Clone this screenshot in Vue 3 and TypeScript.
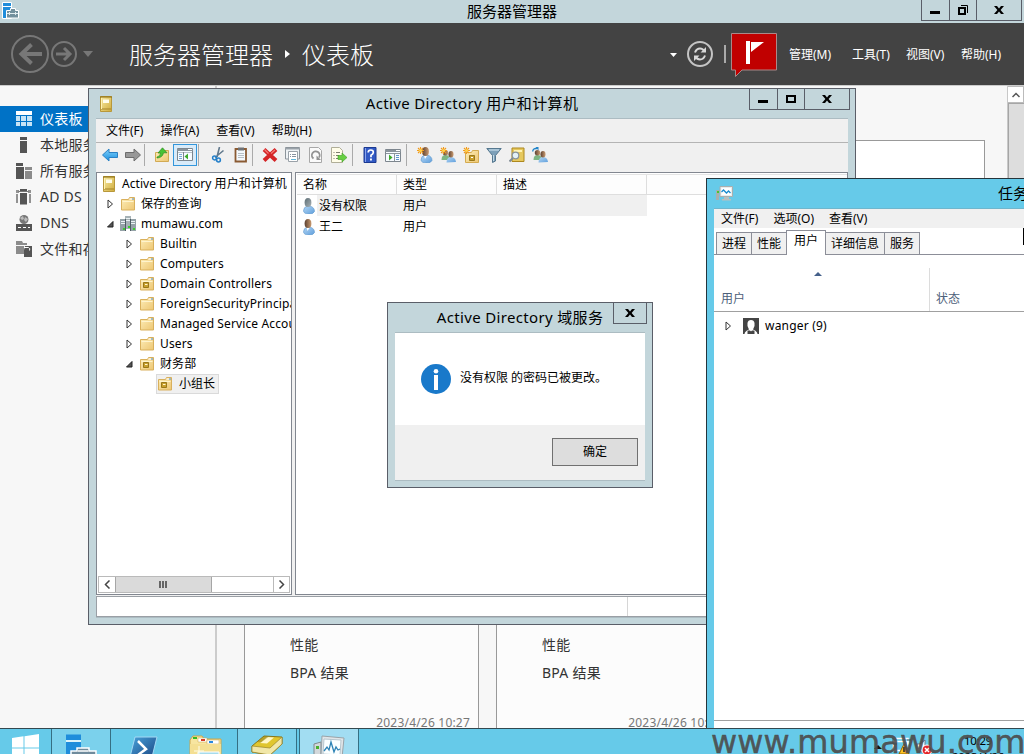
<script setup lang="ts">
interface NavItem { label: string; icon: string; active?: boolean }
interface TreeNode { label: string; icon: string; depth: number; state: 'open' | 'closed' | 'none'; selected?: boolean }
interface UserRow { name: string; type: string; icon: string; selected?: boolean }
interface Tool { icon: string; on?: boolean }

const navItems: NavItem[] = [
  { label: '仪表板', icon: 'n-dash', active: true },
  { label: '本地服务器', icon: 'n-local' },
  { label: '所有服务器', icon: 'n-all' },
  { label: 'AD DS', icon: 'n-adds' },
  { label: 'DNS', icon: 'n-dns' },
  { label: '文件和存储服务', icon: 'n-files' },
]

const tree: TreeNode[] = [
  { label: 'Active Directory 用户和计算机', icon: 'i-book', depth: 0, state: 'none' },
  { label: '保存的查询', icon: 'i-folder', depth: 1, state: 'closed' },
  { label: 'mumawu.com', icon: 'i-domain', depth: 1, state: 'open' },
  { label: 'Builtin', icon: 'i-folder', depth: 2, state: 'closed' },
  { label: 'Computers', icon: 'i-folder', depth: 2, state: 'closed' },
  { label: 'Domain Controllers', icon: 'i-ou', depth: 2, state: 'closed' },
  { label: 'ForeignSecurityPrincipals', icon: 'i-folder', depth: 2, state: 'closed' },
  { label: 'Managed Service Accounts', icon: 'i-folder', depth: 2, state: 'closed' },
  { label: 'Users', icon: 'i-folder', depth: 2, state: 'closed' },
  { label: '财务部', icon: 'i-ou', depth: 2, state: 'open' },
  { label: '小组长', icon: 'i-ou', depth: 3, state: 'none', selected: true },
]

const users: UserRow[] = [
  { name: '没有权限', type: '用户', icon: 'i-user-gray', selected: true },
  { name: '王二', type: '用户', icon: 'i-user' },
]

const toolGroups: Tool[][] = [
  [{ icon: 't-back' }, { icon: 't-fwd' }],
  [{ icon: 't-up' }, { icon: 't-pane', on: true }],
  [{ icon: 't-cut' }, { icon: 't-clip' }],
  [{ icon: 't-del' }, { icon: 't-prop' }, { icon: 't-refresh' }, { icon: 't-export' }],
  [{ icon: 't-help' }, { icon: 't-run' }],
  [{ icon: 't-newuser' }, { icon: 't-newgroup' }, { icon: 't-newou' }, { icon: 't-filter' }, { icon: 't-find' }, { icon: 't-addgroup' }],
]

const adMenus = ['文件(F)', '操作(A)', '查看(V)', '帮助(H)']
const tmMenus = ['文件(F)', '选项(O)', '查看(V)']
const tabs = ['进程', '性能', '用户', '详细信息', '服务']
const tiles = ['2023/4/26 10:27', '2023/4/26 10:27']
</script>

<template>
  <div class="desktop">
    <svg class="defs" width="0" height="0">
      <defs>
        <linearGradient id="gGold" x1="0" y1="0" x2="1" y2="1"><stop offset="0" stop-color="#f8eba4" /><stop offset="1" stop-color="#d0ac3c" /></linearGradient>
        <linearGradient id="gFold" x1="0" y1="0" x2="1" y2="1"><stop offset="0" stop-color="#fdeeb8" /><stop offset="1" stop-color="#edc673" /></linearGradient>
        <linearGradient id="gBlue" x1="0" y1="0" x2="0" y2="1"><stop offset="0" stop-color="#7fd0fa" /><stop offset="1" stop-color="#1b8fe0" /></linearGradient>
        <linearGradient id="gBody" x1="0" y1="0" x2="1" y2="1"><stop offset="0" stop-color="#b4d6f4" /><stop offset="1" stop-color="#5f9fdc" /></linearGradient>
        <linearGradient id="gHead" x1="0" y1="0" x2="1" y2="0"><stop offset="0" stop-color="#5b4030" /><stop offset="1" stop-color="#c99a70" /></linearGradient>
        <linearGradient id="gGrayHead" x1="0" y1="0" x2="1" y2="1"><stop offset="0" stop-color="#5c6d74" /><stop offset="1" stop-color="#a9b2b6" /></linearGradient>
        <linearGradient id="gPs" x1="0" y1="0" x2="1" y2="1"><stop offset="0" stop-color="#4aa5dd" /><stop offset="1" stop-color="#173f7c" /></linearGradient>
      </defs>
      <symbol id="i-book" viewBox="0 0 16 16"><path d="M2.500.5h11v15h-11z" fill="url(#gGold)" stroke="#b8983a" /><path d="M2 1h12" stroke="#8a6c10" /><path d="M5 3.500h6v3.500H5z" fill="#fffdec" /><path d="M3 13h10" stroke="#a5852a" /><path d="M3.500 2v11" stroke="#fff3b5" /></symbol>
      <symbol id="i-folder" viewBox="0 0 16 16"><path d="M1.500 3.500h7l1-2h5v12.500h-13z" fill="url(#gFold)" stroke="#d9b05c" /><path d="M9.500 3h3" stroke="#fff" /><path d="M12 3h2" stroke="#4a94dc" /><path d="M2.500 5.500h11" stroke="#fff4cd" /></symbol>
      <symbol id="i-ou" viewBox="0 0 16 16"><use href="#i-folder" /><path d="M4.500 6.500h5v5h-5z" fill="#c8a02e" stroke="#9a7818" /><path d="M6 8.500h2.500" stroke="#fff7cf" /></symbol>
      <symbol id="i-domain" viewBox="0 0 16 16"><path d="M5 0h6v13H5z" fill="#a6b2b6" /><path d="M0 3h6v12H0zM10 3h6v12h-6z" fill="#94a2a7" /><path d="M6 2.500h4M6 4.500h4M1 5.500h4M1 7.500h4M11 5.500h4M11 7.500h4" stroke="#eaf2f4" /><path d="M5.500 3v12M10.500 3v12" stroke="#4e5d64" /><path d="M3 13h2M8 11h2M13 13h2" stroke="#37d02b" stroke-width="2" /></symbol>
      <symbol id="i-user" viewBox="0 0 16 16"><path d="M2.500 13q0-4 4-5h2q5 1 5 5.500-1 2.500-5.500 2.500-5 0-5.500-3z" fill="url(#gBody)" stroke="#5b96cd" stroke-width=".6" /><path d="M5.500 8.500l1 3.500 2-3z" fill="#fff" /><ellipse cx="7" cy="4.500" rx="3.400" ry="4.500" fill="url(#gHead)" /></symbol>
      <symbol id="i-user-gray" viewBox="0 0 16 16"><path d="M2.500 13q0-4 4-5h2q5 1 5 5.500-1 2.500-5.500 2.500-5 0-5.500-3z" fill="url(#gBody)" stroke="#5b96cd" stroke-width=".6" /><ellipse cx="7" cy="4.500" rx="3.400" ry="4.500" fill="url(#gGrayHead)" /></symbol>
      <symbol id="i-star" viewBox="0 0 16 16"><path d="M3.500 0v7M0 3.500h7M1 1l5 5M6 1L1 6" stroke="#f19a1c" stroke-width="1.100" /><circle cx="3.500" cy="3.500" r="1.600" fill="#ffd24a" /></symbol>
      <symbol id="i-pair" viewBox="0 0 16 16"><path d="M1.500 13q0-5 4-5t5 5z" fill="#7db583" /><circle cx="5.500" cy="5.800" r="2.700" fill="url(#gHead)" /><path d="M6.500 15.500q0-5 4-5.500 5 0 5.500 5z" fill="url(#gBody)" /><ellipse cx="11" cy="7.200" rx="2.500" ry="3.200" fill="url(#gHead)" /></symbol>

      <symbol id="t-back" viewBox="0 0 16 16"><path d="M.5 8L7 2v3.500h8.500v5H7V14z" fill="url(#gBlue)" stroke="#2a80c4" /></symbol>
      <symbol id="t-fwd" viewBox="0 0 16 16"><path d="M15.500 8L9 2v3.500H.5v5H9V14z" fill="#989898" stroke="#6c6c6c" /></symbol>
      <symbol id="t-up" viewBox="0 0 16 16"><path d="M1.500 5.500h7l1.500-2h4.500v11h-13z" fill="url(#gFold)" stroke="#d2aa54" /><path d="M3 10q3.500-.5 3.500-4H4L8.500.8l4.500 5H9.500q-1 5-6.500 5.200z" fill="#48c234" stroke="#2a8d1e" stroke-width=".7" /></symbol>
      <symbol id="t-pane" viewBox="0 0 16 16"><path d="M.5 1.500h15v12H.5z" fill="#f7fbff" stroke="#7d868e" /><path d="M0 2h16v2H0z" fill="#8a949c" /><path d="M1 5.500h14" stroke="#b8c2ca" /><path d="M11 2.500h4" stroke="#fff" /><path d="M6.500 5v8" stroke="#7d868e" /><path d="M2 7.500h3M2 9.500h3M2 11.500h3" stroke="#7aa8d6" /><path d="M11 6.500v6l-3.500-3z" fill="#3dab2a" /></symbol>
      <symbol id="t-cut" viewBox="0 0 16 16"><path d="M9.500 0L7 10M13.500 3.500L5 10.500" stroke="#60788c" stroke-width="1.600" /><circle cx="4.500" cy="11" r="1.900" fill="none" stroke="#2580ca" stroke-width="1.500" /><circle cx="8.500" cy="13" r="1.900" fill="none" stroke="#2580ca" stroke-width="1.500" /></symbol>
      <symbol id="t-clip" viewBox="0 0 16 16"><path d="M2.500 2h10.500v12.500H2.500z" fill="#f4f9fd" stroke="#8a5a32" stroke-width="1.800" /><path d="M5 .5h6v3H5z" fill="#6e7276" /><path d="M5 6.500h6M5 8.500h6M5 10.500h6" stroke="#b8c0c6" /></symbol>
      <symbol id="t-del" viewBox="0 0 16 16"><path d="M2 2.500l12 11M14 2.500L2 13.500" stroke="#d42426" stroke-width="4" /><path d="M2.500 2.500l4 4M13 3L9 6.500" stroke="#f57a74" stroke-width="1.200" /></symbol>
      <symbol id="t-prop" viewBox="0 0 16 16"><path d="M.5.500h14v11.500H.5z" fill="#eef2f5" stroke="#8c949b" /><path d="M0 1h15v1.500H0z" fill="#9aa2a9" /><path d="M3.500 4.500h9v10h-9z" fill="#fff" stroke="#9aa2a9" /><path d="M5 7.500h1M7 7.500h4M5 9.500h1M7 9.500h4" stroke="#8793a0" /><path d="M6 12.500h5" stroke="#5fb6dc" /></symbol>
      <symbol id="t-refresh" viewBox="0 0 16 16"><path d="M1.500.5h9l3 3v12h-12z" fill="#fafafa" stroke="#a8a8a8" /><path d="M5.500 11.500a3.900 3.900 0 1 1 5.500-1" fill="none" stroke="#929292" stroke-width="1.800" /><path d="M8.500 8.500v4.500H13z" fill="#929292" /></symbol>
      <symbol id="t-export" viewBox="0 0 16 16"><path d="M.5.5h8l3 3v12H.5z" fill="#fffde9" stroke="#b0ae98" /><path d="M2.500 5.500h1M5 5.500h4M2.500 8.500h1M5 8.500h3M2.500 11.500h1M5 11.500h3" stroke="#7e7e70" /><path d="M7 8.500h4V6l5 4.500-5 4.500v-2.500H7z" fill="#67cf42" stroke="#3ea024" stroke-width=".6" /></symbol>
      <symbol id="t-help" viewBox="0 0 16 16"><path d="M2 .5h12v15H2z" fill="#3159c4" stroke="#1c3a91" /><path d="M3.500 1v14" stroke="#8aa4ec" /><path d="M6.200 5.500q0-2.500 2.600-2.500t2.500 2.500q0 1.300-2.300 2.800v2" fill="none" stroke="#fff" stroke-width="1.700" /><path d="M8 11.500h1.900v2H8z" fill="#fff" /></symbol>
      <symbol id="t-run" viewBox="0 0 16 16"><path d="M.5 2.500h15v12H.5z" fill="#f7fbff" stroke="#7d868e" /><path d="M0 3h16v2H0z" fill="#8a949c" /><path d="M11 3.500h4" stroke="#fff" /><path d="M1 6.500h14M9.500 6v8" stroke="#8b959d" /><path d="M11 8.500h3M11 10.500h3M11 12.500h3" stroke="#5f94cc" /><path d="M4 7.500v6l3.500-3z" fill="#3dab2a" /></symbol>
      <symbol id="t-newuser" viewBox="0 0 16 16"><use href="#i-user" x="1.500" width="16" height="16" /><use href="#i-star" width="16" height="16" /></symbol>
      <symbol id="t-newgroup" viewBox="0 0 16 16"><use href="#i-pair" /><use href="#i-star" /></symbol>
      <symbol id="t-newou" viewBox="0 0 16 16"><path d="M2.500 5.500h6l1-2h6v12h-13z" fill="url(#gFold)" stroke="#d4ab50" /><path d="M6.500 8.500h5v5h-5z" fill="#c8a02e" stroke="#9a7818" /><path d="M8 10.500h2" stroke="#fff" /><use href="#i-star" /></symbol>
      <symbol id="t-filter" viewBox="0 0 16 16"><path d="M.8 1.500h14.400L9.500 8.500V14L6.500 15.500v-7z" fill="#7da0b9" stroke="#56788f" /><path d="M3 3h10" stroke="#d6e8f3" /><path d="M7.500 8v6" stroke="#c4dae8" /></symbol>
      <symbol id="t-find" viewBox="0 0 16 16"><path d="M3 1h12v13.500H3z" fill="#e6c85e" stroke="#ad881e" /><path d="M5 3h8v2H5z" fill="#fff3b4" /><circle cx="6.500" cy="8.500" r="3.300" fill="#e3f1f8" stroke="#87929a" stroke-width="1.200" /><path d="M4 11L.5 14.500" stroke="#808b94" stroke-width="2" /></symbol>
      <symbol id="t-addgroup" viewBox="0 0 16 16"><use href="#i-pair" /><path d="M.7 4.500Q1 1 5 1.500" fill="none" stroke="#2084c9" stroke-width="1.400" /><path d="M3.500 0h3v3.500z" fill="#2084c9" /></symbol>

      <symbol id="n-dash" viewBox="0 0 16 16"><path d="M0 0h16v4H0z" fill="#fff" /><path d="M0 5h4v5H0zM5 5h5v5H5zM11 5h5v5h-5zM0 11h4v4H0zM5 11h5v4H5zM11 11h5v4h-5z" fill="#c7e4f6" /></symbol>
      <symbol id="n-local" viewBox="0 0 16 16"><path d="M4 0h7v3H4zM4 4h7v12H4z" fill="#555" /></symbol>
      <symbol id="n-all" viewBox="0 0 16 16"><path d="M0 0h7v3H0zM0 4h8v12H0z" fill="#555" /><path d="M9 4h7v3H9zM9 8h7v8H9z" fill="#8b8b8b" /></symbol>
      <symbol id="n-adds" viewBox="0 0 16 16"><path d="M0 1h3v3H0zM12 1h3v3h-3zM0 5h2v9H0zM13 5h2v9h-2z" fill="#929292" /><path d="M4 0h7v2H4zM4 4h7v11.500H4z" fill="#555" /><path d="M2.500 2.500h10" stroke="#777" /></symbol>
      <symbol id="n-dns" viewBox="0 0 16 16"><circle cx="8" cy="4.500" r="4.500" fill="#777" /><path d="M4 3l3-2 1 3-2 1zM9 2l3 2-2 3-2-2z" fill="#bbb" /><path d="M0 9h16v7H0z" fill="#555" /><path d="M2 12.500h3M7 12.500h3M12 12.500h2" stroke="#fff" /></symbol>
      <symbol id="n-files" viewBox="0 0 16 16"><path d="M0 0h6l1 2h4v2H0zM0 5h8v8H0z" fill="#8b8b8b" /><path d="M9 5h7v11H8V9z" fill="#555" /><path d="M8 6.500h4.500q2 1 1 3" fill="none" stroke="#fff" /></symbol>
      <symbol id="w-x" viewBox="0 0 10 8"><path d="M0 0h3l2 2.500L7 0h3L6.600 4 10 8H7L5 5.500 3 8H0l3.400-4z" /></symbol>
    </svg>

    <!-- Server Manager -->
    <section class="sm">
      <header class="sm-title">
        <svg class="sm-logo" width="17" height="17" viewBox="0 0 17 17"><path d="M.5.5h9v16h-9z" fill="#1f8ddb" stroke="#fff" /><path d="M1 4.500h8" stroke="#fff" /><path d="M4.500 8.500h4v-2h5v2h3v7.500h-12z" fill="#73909d" stroke="#fff" /><path d="M5 11.500h11M7.500 10v3M13.500 10v3" stroke="#e2edf0" /></svg>
        <span class="caption">服务器管理器</span>
        <div class="wbtns">
          <i class="wb narrow"><svg width="10" height="3"><rect width="10" height="3" /></svg></i>
          <i class="wb mid"><svg width="10" height="10" viewBox="0 0 10 10" fill="none" stroke="#000"><path d="M1 3h6v6H1z" stroke-width="2" /><path d="M3 .5h6.500V8" /></svg></i>
          <i class="wb wide"><svg width="10" height="8"><use href="#w-x" /></svg></i>
        </div>
      </header>
      <div class="sm-head">
        <svg class="sm-nav" width="84" height="40" viewBox="0 0 84 40" fill="none" stroke="#777"><circle cx="19" cy="20" r="18" stroke-width="2" /><path d="M31 20H10M20.500 10.500L10.500 20l10 9.500" stroke-width="4" /><circle cx="53" cy="20" r="12" stroke-width="2" /><path d="M45 20h14M53 14l6 6-6 6" stroke-width="3" /><path d="M72 17h10l-5 6z" fill="#777" stroke="none" /></svg>
        <h1>服务器管理器</h1>
        <svg class="crumb" width="6" height="10"><path d="M0 1l5 4-5 4z" fill="#fff" /></svg>
        <h1>仪表板</h1>
        <div class="sm-right">
          <svg width="54" height="40" viewBox="0 0 54 40" fill="none"><path d="M0 19h7l-3.500 4z" fill="#fff" /><circle cx="30" cy="20" r="12" stroke="#c4c4c4" stroke-width="2" /><path d="M25 18.500q1.500-4 5-4 3 0 4.500 3M35 21.500q-1.500 4-5 4-3 0-4.500-3" stroke="#d8d8d8" stroke-width="2" /><path d="M36 13v5.500h-5.500zM24 27v-5.500h5.500z" fill="#d8d8d8" /></svg>
          <i class="bar"></i>
          <svg class="flag" width="46" height="44" viewBox="0 0 46 44"><path d="M.5.500h45v36.500H11L4.500 43.500V37h-4z" fill="#c00000" stroke="#a88" /><path d="M15 8h4v23h-4z" fill="#fff" /><path d="M20 9h13L20 19z" fill="#fff" /></svg>
          <span class="m1">管理(M)</span><span class="m2">工具(T)</span><span class="m3">视图(V)</span><span class="m4">帮助(H)</span>
        </div>
      </div>
      <div class="sm-body">
        <nav>
          <div v-for="n in navItems" :key="n.label" class="nav-item" :class="{ active: n.active }">
            <svg width="16" height="16"><use :href="'#' + n.icon" /></svg><span>{{ n.label }}</span>
          </div>
        </nav>
        <main>
          <div class="welcome"></div>
          <div class="tiles">
            <article v-for="(t, i) in tiles" :key="i" class="tile"><p>性能</p><p>BPA 结果</p><time>{{ t }}</time></article>
          </div>
        </main>
        <div class="vscroll"><i class="up"><svg width="8" height="6" fill="none" stroke="#555" stroke-width="1.500"><path d="M.5 5L4 1.500 7.500 5" /></svg></i><i class="thumb"></i></div>
      </div>
    </section>

    <!-- Active Directory Users and Computers -->
    <section class="win ad">
      <header class="ad-title">
        <svg class="ad-logo" width="16" height="16"><use href="#i-book" /></svg>
        <span class="caption spaced">Active Directory 用户和计算机</span>
        <div class="wbtns">
          <i class="wb narrow"><svg width="10" height="3"><rect width="10" height="3" /></svg></i>
          <i class="wb mid"><svg width="10" height="8"><path d="M1 1h8v6H1z" fill="none" stroke="#000" stroke-width="2" /></svg></i>
          <i class="wb wide"><svg width="10" height="8"><use href="#w-x" /></svg></i>
        </div>
      </header>
      <div class="client ad-client">
        <div class="menu"><span v-for="m in adMenus" :key="m">{{ m }}</span></div>
        <div class="toolbar">
          <div v-for="(g, gi) in toolGroups" :key="gi" class="tgroup" :class="'g' + gi">
            <i v-for="t in g" :key="t.icon" class="tool" :class="{ on: t.on }"><svg width="16" height="16"><use :href="'#' + t.icon" /></svg></i>
          </div>
        </div>
        <div class="panes">
          <div class="tree">
            <div class="tree-rows">
              <div v-for="n in tree" :key="n.label" class="tnode" :class="'d' + n.depth">
                <i class="exp">
                  <svg v-if="n.state === 'closed'" width="7" height="10"><path d="M1 1v8l4.500-4z" fill="#fff" stroke="#333" /></svg>
                  <svg v-else-if="n.state === 'open'" width="7" height="7"><path d="M6 .5v5.500H.5z" fill="#555" stroke="#222" /></svg>
                </i>
                <span class="tlabel" :class="{ selected: n.selected }"><svg width="16" height="16"><use :href="'#' + n.icon" /></svg><b>{{ n.label }}</b></span>
              </div>
            </div>
            <div class="hscroll">
              <i class="hb"><svg width="7" height="9" fill="none" stroke="#444" stroke-width="1.500"><path d="M5.500.5l-4 4 4 4" /></svg></i>
              <i class="hthumb"><svg width="9" height="7"><path d="M0 0h2v7H0zM3 0h2v7H3zM6 0h2v7H6z" fill="#666" /></svg></i>
              <i class="htrack"></i>
              <i class="hb r"><svg width="7" height="9" fill="none" stroke="#444" stroke-width="1.500"><path d="M1.500.5l4 4-4 4" /></svg></i>
            </div>
          </div>
          <div class="list">
            <div class="lhead"><span>名称</span><span>类型</span><span class="last">描述</span></div>
            <div v-for="u in users" :key="u.name" class="lrow">
              <svg width="16" height="16"><use :href="'#' + u.icon" /></svg>
              <div class="lcells" :class="{ selected: u.selected }"><span>{{ u.name }}</span><span>{{ u.type }}</span></div>
            </div>
          </div>
        </div>
        <div class="status"><i></i></div>
      </div>
    </section>

    <!-- Message box -->
    <section class="win dlg">
      <header class="dlg-title">
        <span class="caption spaced">Active Directory 域服务</span>
        <div class="wbtns"><i class="wb close"><svg width="10" height="8"><use href="#w-x" /></svg></i></div>
      </header>
      <div class="client dlg-client">
        <div class="msg">
          <svg width="30" height="30"><circle cx="15" cy="15" r="15" fill="#1979ca" /><circle cx="15" cy="7.300" r="2.300" fill="#fff" /><path d="M13 11h4v15h-4z" fill="#fff" /></svg>
          <p>没有权限 的密码已被更改。</p>
        </div>
        <footer><button>确定</button></footer>
      </div>
    </section>

    <!-- Task Manager -->
    <section class="win tm">
      <header class="tm-title">
        <svg width="17" height="15" viewBox="0 0 17 15"><path d="M0 4h3v10H0z" fill="#a9afaf" /><path d="M1 5h2v2H1z" fill="#4ac42c" /><path d="M4 .5h12.500v10H4z" fill="#e8eded" stroke="#a9afaf" /><path d="M5.500 2h9.500v7H5.500z" fill="#fff" /><path d="M5.500 6L7.500 4l3 3L12.500 5l2 2" fill="none" stroke="#1a8ccf" stroke-width="1.300" /><path d="M8 11h5v2h2v1.500H6V13h2z" fill="#b8bfbf" /></svg>
        <span>任务管理器</span>
      </header>
      <div class="client tm-client">
        <div class="menu tm-menu"><span v-for="m in tmMenus" :key="m">{{ m }}</span></div>
        <div class="tabs"><span v-for="(t, i) in tabs" :key="t" :class="{ active: i === 2 }">{{ t }}</span></div>
        <div class="cols">
          <div class="col1"><svg width="8" height="4"><path d="M0 4l4-4 4 4z" fill="#44608a" /></svg><span>用户</span></div>
          <div class="col2">状态</div>
        </div>
        <div class="tm-row">
          <svg width="7" height="10"><path d="M1 1v8l4.500-4z" fill="#fff" stroke="#333" /></svg>
          <svg class="avatar" width="16" height="16"><path d="M0 0h16v16H0z" fill="#444" /><path d="M1.500 16q.5-3 4.500-4.500L4.500 8V5q.5-3 3.500-3t3.500 3v3L10 11.500q4 1.500 4.500 4.500z" fill="#fff" /><path d="M4.500 12.500h7V16h-7z" fill="#444" /><path d="M6 11l2 2.500 2-2.500z" fill="#fff" /></svg>
          <b>wanger (9)</b>
        </div>
        <div class="tm-foot"></div>
      </div>
    </section>
    <i class="caret"></i>

    <!-- Taskbar -->
    <footer class="taskbar">
      <div class="tb start"><svg width="28" height="32" viewBox="0 0 28 32"><path d="M0 5l11.500-1.700V14.500H0zM12.500 3.200L27 1v13.500H12.500zM0 15.500h11.500V28L0 26.500zM12.500 15.500H27V31l-14.500-2z" fill="#fff" /></svg></div>
      <div class="tb open sv"><svg width="34" height="34" viewBox="0 0 34 34"><path d="M1 .5h15V6H1zM1 8h15v24H1z" fill="#1f8ddb" /><path d="M1 7h15" stroke="#fff" stroke-width="1.500" /><path d="M6 17h6v-3h12v3h7v15H6z" fill="#6f8b9c" stroke="#fff" stroke-width="1.500" /><path d="M13 17h10" stroke="#fff" stroke-width="1.500" /></svg></div>
      <div class="tb ps"><svg width="32" height="32" viewBox="0 0 32 32"><path d="M5 3h22l-6 24H-1z" fill="url(#gPs)" stroke="#a4d9f4" /><path d="M8 7l8 8-12 9" fill="none" stroke="#fff" stroke-width="2.500" /></svg></div>
      <div class="tb ex"><svg width="34" height="32" viewBox="0 0 34 32"><path d="M1 5l3-4h9l2 3h17v26H1z" fill="#f7e5a0" stroke="#cba64d" /><path d="M4 2h4v2H4z" fill="#36b924" /><path d="M9 3h9v4H9z" fill="#fff" stroke="#cba64d" stroke-width=".5" /><path d="M12 4h4v2h-4z" fill="#d93a24" /><path d="M18 5h12v4H18z" fill="#fff" stroke="#cba64d" stroke-width=".5" /><path d="M20 6h4v2h-4z" fill="#2789e0" /><path d="M1 9h31v21H1z" fill="#f4df93" /><path d="M9 17h21v12H9z" fill="#a6dbec" stroke="#fff" /><path d="M10 11v10M5 16h10" stroke="#fffde9" /></svg></div>
      <div class="tb open ad-tb"><svg width="32" height="26" viewBox="0 0 32 26"><path d="M1 11L13 1l18 1v7L19 20 1 17z" fill="#e0c62e" stroke="#88761b" /><path d="M1 11l18 2L31 2v7L19 20 1 17z" fill="#f1e7a8" stroke="#98842a" stroke-width=".7" /><path d="M9 8l7-6 7 .500-7 6z" fill="#fff8c9" /><path d="M13 1L6 7l4 .500 8-6z" fill="#8b7b20" opacity=".5" /></svg></div>
      <div class="tb front"><svg width="34" height="32" viewBox="0 0 34 32"><path d="M1 9l7-2v25H1z" fill="#d3d8db" stroke="#80898d" /><path d="M3 11h3v3H3z" fill="#47b02c" /><path d="M9 1l22 2-2 20-21-2z" fill="#e1e5e8" stroke="#99a3a8" /><path d="M11 4l17 1-1 15-17-1z" fill="#fafeff" stroke="#b6c6ce" /><path d="M11 16l3-4 2 3 2-8 3 10 2-5 2 3 2-1" fill="none" stroke="#2d82b5" stroke-width="1.300" /></svg></div>
      <div class="tray">
        <svg width="64" height="26" viewBox="0 0 64 26"><path d="M1 20l4-4 4 4z" fill="#111" /><path d="M20.500 12.500h14v9h-14zM23 9.500h12v6" fill="#66cae9" stroke="#fff" stroke-width="1.500" /><path d="M20 9v6h4M34 11h4" fill="none" stroke="#345" /><path d="M31 15l5 10H26z" fill="#ffc222" stroke="#8a6500" /><path d="M31 18v5" stroke="#222" stroke-width="1.500" /><path d="M44 15h3l5-4v14l-5-3h-3z" fill="#fff" stroke="#678" /><circle cx="54" cy="21" r="5" fill="#e4252a" stroke="#fff" /><path d="M52 19l4 4M56 19l-4 4" stroke="#fff" stroke-width="1.500" /></svg>
        <div class="clock"><span>10:29</span><span>2023/4/26</span></div>
      </div>
    </footer>
    <div class="mark">www.mumawu.com</div>
  </div>
</template>

<style>
html, body { margin: 0; overflow: hidden; }
</style>

<style scoped>
.desktop { position: relative; width: 1024px; height: 754px; overflow: hidden; background: #f7f7f7; font: 12px/16px "Noto Sans", "Noto Sans CJK SC", sans-serif; color: #000; }
.desktop * { box-sizing: border-box; }
.defs { position: absolute; }
i, b { font-style: normal; font-weight: 400; }
svg { display: block; flex: none; }
span, b, p, time { white-space: nowrap; }
h1, p { margin: 0; }
.caption { font-size: 15px; line-height: 20px; margin-bottom: 2px; }
.caption.spaced { letter-spacing: .34px; }
.wbtns { position: absolute; top: -1px; display: flex; border: 1px solid #5a5e68; }
.wb { display: flex; align-items: center; justify-content: center; height: 20px; }
.wb + .wb { border-left: 1px solid #5a5e68; }
.narrow { width: 27px; padding-right: 1px; }
.narrow svg { margin-top: 5px; }
.mid { width: 27px; padding-right: 1px; }
.wide { width: 45px; padding-right: 1px; }
.close { width: 33px; padding-right: 1px; }

.sm { position: absolute; inset: 0; display: flex; flex-direction: column; }
.sm-title { position: relative; height: 23px; background: #c3d6db; display: flex; align-items: center; justify-content: center; }
.sm-logo { position: absolute; left: 2px; top: 2px; }
.sm-title .wbtns { left: 921px; }
.sm-head { height: 62px; background: #434343; color: #fff; display: flex; align-items: center; padding-left: 11px; }
.sm-nav { margin-right: 34px; }
.sm-head h1 { font-size: 24px; line-height: 32px; font-weight: 300; padding-top: 2px; }
.crumb { margin: 0 11px 0 12px; }
.sm-right { margin-left: auto; width: 354px; display: flex; align-items: center; }
.bar { width: 2px; height: 18px; background: #aaa; margin-right: 5px; }
.flag { margin: 1px 12px 0 0; }
.sm-right span { width: 46px; padding-top: 2px; }
.m1 { margin-right: 17px; }
.m2 { margin-right: 8px; }
.m3 { margin-right: 9px; }
.sm-body { flex: 1; display: flex; border-top: 1px solid #ccc; min-height: 0; background: #f7f7f7; }
nav { width: 217px; border-right: 2px solid #ccc; padding-top: 20px; flex: none; }
.nav-item { height: 26px; display: flex; align-items: center; padding-left: 16px; gap: 8px; font-size: 14px; color: #333; letter-spacing: .25px; }
.nav-item.active { background: #0072c6; color: #fff; }
main { flex: 1; display: flex; flex-direction: column; }
.welcome { width: 741px; height: 360px; margin: 54px 0 0 27px; border: 1px solid #999; background: #fff; }
.tiles { display: flex; gap: 17px; margin: 30px 0 0 27px; flex: 1; }
.tile { width: 235px; border: 1px solid #999; background: #fcfcfc; padding: 100px 8px 0 45px; font-size: 14px; line-height: 28px; color: #333; display: flex; flex-direction: column; letter-spacing: .25px; }
.tile time { align-self: flex-end; font-size: 12px; line-height: 16px; margin-top: 28px; color: #777; letter-spacing: .2px; }
.vscroll { width: 17px; border-left: 1px solid #c8c8c8; background: #f0f0f0; display: flex; flex-direction: column; }
.up { height: 17px; background: #fff; border: 1px solid #bbb; border-left: 0; display: flex; align-items: center; justify-content: center; }
.thumb { flex: 1; background: #ddd; border: 1px solid #a6a6a6; border-right: 0; }

.win { position: absolute; display: flex; flex-direction: column; background: #c3d6db; border: 1px solid #5a5e68; }
.client { border: 1px solid #acbcc2; border-width: 1px 0; background: #f0f0f0; display: flex; flex-direction: column; }
.ad { left: 88px; top: 88px; width: 768px; height: 537px; padding: 0 7px; }
.ad-title { position: relative; height: 29px; display: flex; align-items: center; justify-content: center; }
.ad-logo { position: absolute; left: 2px; top: 7px; }
.ad-title .wbtns { left: 653px; }
.ad-client { height: 500px; }
.menu { height: 24px; display: flex; align-items: center; padding-left: 10px; gap: 17px; border-bottom: 1px solid #b4b4b4; }
.toolbar { height: 29px; display: flex; align-items: center; padding: 0 0 6px 3px; }
.tgroup { display: flex; align-items: center; height: 22px; }
.tgroup + .tgroup { border-left: 1px solid #aaa; }
.tool { width: 23px; height: 22px; display: flex; align-items: center; justify-content: center; flex: none; }
.tool.on { width: 24px; background: #d9ebf9; border: 1px solid #3396db; }
.tgroup.g0 { width: 46px; margin-left: -1px; }
.tgroup.g1 { width: 54px; padding-left: 5px; }
.tgroup.g2 { width: 54px; padding-left: 7px; }
.tgroup.g3 { width: 100px; padding-left: 5px; }
.tgroup.g4 { width: 54px; padding-left: 5px; }
.tgroup.g5 { padding-left: 6px; }
.panes { flex: 1; display: flex; gap: 3px; }
.tree { width: 196px; background: #fff; border: 1px solid #828790; display: flex; flex-direction: column; overflow: hidden; }
.tree-rows { flex: 1; padding-top: 1px; }
.tnode { height: 20px; display: flex; align-items: center; }
.d0 .exp { display: none; }
.d0 .tlabel { margin-left: 3px; }
.d1 { padding-left: 10px; }
.d2 { padding-left: 29px; }
.d3 { padding-left: 47px; }
.exp { width: 7px; margin-right: 5px; flex: none; }
.tlabel { display: flex; align-items: center; height: 20px; border: 1px solid transparent; }
.tlabel b { margin-left: 5px; letter-spacing: .12px; }
.d0 .tlabel b { letter-spacing: .05px; }
.d3 .tlabel b { margin-left: 6px; padding-right: 3px; letter-spacing: 0; }
.tlabel.selected { background: #f0f0f0; border-color: #dadada; }
.hscroll { height: 17px; margin: 0 1px 1px; display: flex; border: 1px solid #bababa; flex: none; }
.hb, .hthumb { display: flex; align-items: center; justify-content: center; }
.hb { width: 16px; }
.hb.r { border-left: 1px solid #bababa; }
.hthumb { width: 97px; background: #dadada; border: 1px solid #a6a6a6; border-width: 0 1px; }
.htrack { flex: 1; background: #fff; }
.list { flex: 1; background: #fff; border: 1px solid #828790; padding: 1px 0 0 1px; }
.lhead { height: 21px; display: flex; border-top: 1px solid #e4e4e4; border-bottom: 1px solid #dedede; background: #fdfdfd; }
.lhead span { width: 100px; padding: 2px 0 0 6px; border-right: 1px solid #dedede; }
.lhead span.last { width: 150px; }
.lrow { height: 21px; display: flex; align-items: center; padding-left: 4px; }
.lcells { display: flex; width: 330px; height: 21px; align-items: center; padding-left: 2px; }
.lcells span { width: 84px; }
.lcells.selected { background: #f0f0f0; }
.status { height: 21px; margin-top: 1px; border: 1px solid #9a9fa5; background: #fff; border-right: 0; }
.status i { display: block; width: 531px; height: 19px; border-right: 1px solid #d6d6d6; }

.dlg { left: 387px; top: 302px; width: 266px; height: 186px; padding: 0 7px; }
.dlg-title { position: relative; height: 29px; display: flex; align-items: center; justify-content: center; }
.dlg-title .wbtns { left: 218px; }
.dlg-title .wbtns .close { width: 32px; }
.dlg-client { height: 149px; background: #f0f0f0; }
.msg { height: 92px; background: #fff; display: flex; align-items: center; padding-left: 26px; gap: 9px; }
.msg p { margin-top: -2px; }
.dlg-client footer { display: flex; justify-content: flex-end; padding: 13px 7px 0 0; }
button { width: 86px; height: 28px; border: 1px solid #707070; background: #ddd; font: inherit; padding: 0; color: #000; border-radius: 0; }

.tm { left: 706px; top: 178px; width: 640px; height: 560px; background: #66cae9; border-color: #25343b; padding: 0 7px; }
.tm-title { height: 29px; display: flex; align-items: center; padding-left: 2px; font-size: 15px; line-height: 20px; }
.tm-title svg { margin-right: 265px; }
.tm-title span { margin-bottom: 2px; }
.tm-client { background: #fff; height: 521px; border-color: #6fb6cd; }
.tm-menu { height: 19px; background: #f0f0f0; border: 0; padding-left: 7px; gap: 15px; }
.tabs { display: flex; align-items: flex-end; height: 27px; padding: 0 0 0 2px; border-bottom: 1px solid #8c8e98; }
.tabs span { height: 22px; padding: 3px 5px 0; border: 1px solid #8c8e98; border-bottom: 0; background: #f0f0f0; line-height: 16px; }
.tabs span + span { margin-left: -1px; }
.tabs span.active { height: 25px; background: #fff; padding: 2px 7px 0; margin-bottom: -1px; position: relative; }
.cols { height: 57px; padding-top: 13px; display: flex; border-bottom: 1px solid #a0a0a0; color: #4c607a; }
.col1 { width: 216px; border-right: 1px solid #dcdcdc; padding: 4px 7px 0; }
.col1 svg { margin: 0 0 15px 93px; }
.col2 { padding: 23px 0 0 6px; }
.tm-row { height: 28px; display: flex; align-items: center; padding-left: 11px; }
.tm-row b { margin-left: 6px; letter-spacing: .2px; }
.avatar { margin-left: 11px; }
.tm-foot { flex: none; height: 381px; border-bottom: 1px solid #a0a0a0; }
.caret { position: absolute; left: 1023px; top: 228px; width: 1px; height: 17px; background: #000; }

.taskbar { position: absolute; left: 0; right: 0; bottom: 0; height: 26px; background: #66cae9; border-top: 1px solid #33484f; display: flex; overflow: hidden; }
.tb { height: 25px; flex: none; overflow: hidden; }
.start { width: 51px; padding: 4px 0 0 12px; }
.open { background: #7bd1ec; border: 1px solid #356f83; border-width: 0 1px; }
.sv { width: 60px; padding: 5px 0 0 13px; }
.ps { width: 63px; padding: 5px 0 0 19px; }
.ex { width: 63px; padding: 6px 0 0 15px; }
.ad-tb { width: 60px; padding: 6px 0 0 13px; }
.front { width: 60px; margin-left: 2px; padding: 6px 0 0 13px; background: #a2ddf2; border: 1px solid #356f83; border-width: 0 1px; }
.tray { margin-left: auto; display: flex; width: 151px; }
.clock { display: flex; flex-direction: column; align-items: center; margin-left: 11px; width: 60px; padding-top: 4px; font-size: 11.5px; letter-spacing: -.3px; line-height: 16px; flex: none; }
.mark { position: absolute; left: 711px; top: 722px; font: 32px/40px "DejaVu Sans", sans-serif; letter-spacing: .12px; color: rgba(76, 76, 76, .92); -webkit-text-stroke: .5px rgba(76, 76, 76, .92); white-space: nowrap; }
</style>
